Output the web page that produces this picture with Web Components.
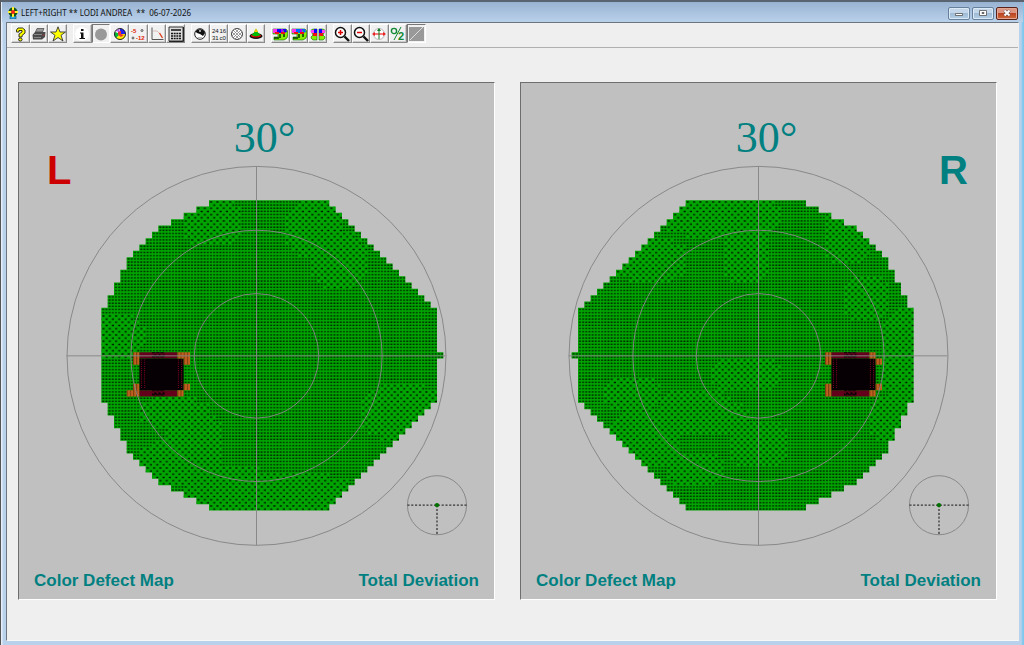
<!DOCTYPE html>
<html lang="en">
<head>
<meta charset="utf-8">
<title>LEFT+RIGHT ** LODI ANDREA ** 06-07-2026</title>
<style>
html, body { height: 100%; margin: 0; }
body { font-family: "Liberation Sans", Arial, sans-serif; background: #b9d1ea; }
</style>
</head>
<body>
<app-window caption="LEFT+RIGHT ** LODI ANDREA  **  06-07-2026">
  <tool-bar slot="tools">
    <tool-group>
      <tool-button icon="help" label="Help"></tool-button>
      <tool-button icon="print" label="Print"></tool-button>
      <tool-button icon="star" label="Favourites"></tool-button>
    </tool-group>
    <tool-group size="6">
      <tool-button icon="info" label="Information"></tool-button>
      <tool-button icon="disc" label="Defect map" pressed></tool-button>
      <tool-button icon="wheel" label="Colour map"></tool-button>
      <tool-button icon="values" label="Deviation values"></tool-button>
      <tool-button icon="curve" label="Defect curve"></tool-button>
      <tool-button icon="grid" label="Table"></tool-button>
    </tool-group>
    <tool-group size="4">
      <tool-button icon="gray" label="Gray scale"></tool-button>
      <tool-button icon="numbers" label="Thresholds"></tool-button>
      <tool-button icon="hatch" label="Symbols"></tool-button>
      <tool-button icon="hill" label="Hill of vision"></tool-button>
    </tool-group>
    <tool-group>
      <tool-button icon="pairA" label="Compare left"></tool-button>
      <tool-button icon="pairB" label="Compare right"></tool-button>
      <tool-button icon="pairC" label="Compare both"></tool-button>
    </tool-group>
    <tool-group size="5">
      <tool-button icon="zoomIn" label="Zoom in"></tool-button>
      <tool-button icon="zoomOut" label="Zoom out"></tool-button>
      <tool-button icon="target" label="Center"></tool-button>
      <tool-button icon="percent" label="Percent"></tool-button>
      <tool-button icon="diagonal" label="Diagonal" pressed></tool-button>
    </tool-group>
  </tool-bar>
  <field-panel eye="left">
    <span slot="range">30°</span><span slot="eye">L</span>
    <span slot="kind">Color Defect Map</span><span slot="measure">Total Deviation</span>
  </field-panel>
  <field-panel eye="right">
    <span slot="range">30°</span><span slot="eye">R</span>
    <span slot="kind">Color Defect Map</span><span slot="measure">Total Deviation</span>
  </field-panel>
</app-window>

<script>
const ICONS = {
  help: '<path d="M4.500 5.500V4L6 2h4.500L13 4v3l-3 2.500V11H7V8l3-2V4.500H7V6H4.500z" fill="#ff0" stroke="#000" stroke-width=".8"/><ellipse cx="8.300" cy="13.500" rx="1.800" ry="1.500" fill="#ff0" stroke="#000" stroke-width=".8"/>',
  print: '<path d="M6 2.500 13 2.500 11.500 6H4.500z" fill="#999" stroke="#444" stroke-width=".7"/><path d="M1.500 9 4 6h10.500L14 11l-3 2.500H2z" fill="#4a4a4a"/><path d="M3 8.500h8" stroke="#999" stroke-width=".8"/><path d="M3 11.500h7" stroke="#888"/><path d="M11.500 9h2" stroke="#a33"/>',
  star: '<path d="M8 .8 10 6h5.500L11 9.300l2 5.700-5-3.500L3 15l2-5.700L.5 6H6z" fill="#ff0" stroke="#333" stroke-width=".9"/>',
  info: '<circle cx="8" cy="8" r="7" fill="#fff"/><path d="M7 3h2.500v2H7zM6 6.500h3.500V12H11v1H5.500v-1H7V7.500H6z" fill="#111"/>',
  disc: '<circle cx="8" cy="8.500" r="6" fill="#999"/>',
  wheel: '<circle cx="8" cy="8" r="5.500" fill="#fff"/><path d="M8 8V2.500A5.500 5.500 0 0 1 13.500 8z" fill="#22f"/><path d="M8 8h5.500A5.500 5.500 0 0 1 4 12z" fill="#fe0"/><path d="M8 8 4 12A5.500 5.500 0 0 1 3 6l3 1z" fill="#0b3"/><path d="M6 5h3v3l3 1-3 2-3-2z" fill="#e33"/><path d="M3.500 5l4-2.500V6z" fill="#b5f"/><circle cx="8" cy="8" r="5.500" fill="none" stroke="#222"/>',
  values: '<g font-family="Liberation Sans, sans-serif" font-weight="bold" font-size="6" fill="#d20"><text x="1" y="6.500">-5</text><text x="6" y="14">-12</text></g><g fill="none" stroke="#333" stroke-width=".8"><circle cx="12" cy="4.500" r="1"/><circle cx="3" cy="12" r="1"/></g>',
  curve: '<path d="M3 1.500v12H14.500" fill="none" stroke="#555"/><path d="M4 5h4l3 3 2 3" fill="none" stroke="#dbb"/><path d="M10.500 7l3 5" stroke="#d42" stroke-width="1.400"/>',
  grid: '<path d="M1 1h14v14H1z" fill="#ddd" stroke="#333"/><path d="M3 4h10M3 7.500h10M3 10h10M3 12.500h10" stroke="#111" stroke-width="1.500"/><path d="M5.500 6v8M8 6v8M10.500 6v8" stroke="#ddd" stroke-width=".7"/><path d="M15.500 1v14.500H1" stroke="#222" fill="none"/>',
  gray: '<circle cx="8" cy="8" r="5.300" fill="#fff" stroke="#222"/><path d="M3.500 5.500A5.300 5.300 0 0 1 13 7L11 10 8 8 5 7z" fill="#111"/><circle cx="8" cy="5" r="1" fill="#ccc"/><path d="M5 11q3 3 6 0z" fill="#bbb"/>',
  numbers: '<g font-family="Liberation Sans, sans-serif" font-size="6" fill="#111"><text x="1" y="7">24</text><text x="8.500" y="7">16</text><text x="1" y="14">31</text><text x="8.500" y="14">c0</text></g>',
  hatch: '<circle cx="8" cy="8" r="5.500" fill="#fff"/><path d="M4 4l8 8M6 3l7 7M3 6l7 7M12 4l-8 8M10 3l-7 7M13 6l-7 7" stroke="#888" stroke-width=".8"/><circle cx="8" cy="8" r="5.500" fill="none" stroke="#444"/>',
  hill: '<ellipse cx="8" cy="10" rx="6.500" ry="3" fill="#111"/><path d="M3 9q3-1 4-5l1-1 1 1q1 4 4 5-5 3-10 0z" fill="#0b0"/><path d="M6 6l2-3.500L10 6z" fill="#fc0"/><path d="M3 9.500q5 3 10 0" stroke="#e00" stroke-width="1.200" fill="none"/>',
  pairA: '<path d="M1 3h13q2 1 2 5 0 5-4 6H2v-3h4V8H1z" fill="#8e0" stroke="#060" stroke-width=".6"/><path d="M1 3h4v4H1z" fill="#f3e"/><path d="M5 3h4v4H5zM11 3h3l1 3-3 1z" fill="#10f"/><path d="M9 3h2v3H9z" fill="#a0f"/><path d="M3 6h4v2H3zM9 6h4v2H9z" fill="#e11"/><path d="M2 12h5M8 8v4M12 8v3" stroke="#030" stroke-width="1.500"/>',
  zoomIn: '<circle cx="6.500" cy="6.500" r="5" fill="#fff" stroke="#111" stroke-width="1.500"/><path d="M10.500 10.500 15 15" stroke="#111" stroke-width="2.400"/><path d="M4 6.500h5M6.500 4v5" stroke="#d00" stroke-width="1.500"/>',
  zoomOut: '<circle cx="6.500" cy="6.500" r="5" fill="#fff" stroke="#111" stroke-width="1.500"/><path d="M10.500 10.500 15 15" stroke="#111" stroke-width="2.400"/><path d="M4 6.500h5" stroke="#d00" stroke-width="1.500"/>',
  target: '<circle cx="8" cy="8" r="5.500" fill="#fff" stroke="#999" stroke-width=".7"/><path d="M2 8h12" stroke="#e22" stroke-width="1.200"/><path d="M4 6v4L1 8zM12 6v4l3-2z" fill="#e22"/><path d="M8 3v10" stroke="#172"/><path d="M6 5h4L8 2z" fill="#172"/>',
  percent: '<circle cx="4" cy="5" r="2.600" fill="none" stroke="#183" stroke-width="1.400"/><path d="M11 1 4 14" stroke="#183"/><text x="8" y="14" font-family="Liberation Sans, sans-serif" font-weight="bold" font-size="11" fill="#183">2</text>',
  diagonal: '<path d="M0 1h15v14H0z" fill="#999"/><path d="M1 14 14 1" stroke="#ddd"/>'
};
ICONS.pairB = ICONS.pairA.replace('#10f', '#06f');
ICONS.pairC = '<path d="M1 5q0-2 3-2h3v11H3q-2-1-2-3l2-2zM15 5q0-2-3-2H9v11h4q2-1 2-3l-2-2z" fill="#8e0" stroke="#060" stroke-width=".6"/><path d="M1 4h3v3H1zM12 4h3v3h-3z" fill="#f4e"/><path d="M4 3h3v4H4zM9 3h3v4H9z" fill="#10f"/><path d="M3 7h4v3H3zM9 7h4v3H9z" fill="#e11"/>';

function define(name, html, setup) {
  const template = document.createElement('template');
  template.innerHTML = html;
  customElements.define(name, class extends HTMLElement {
    constructor() {
      super();
      this.attachShadow({ mode: 'open' }).append(template.content.cloneNode(true));
    }
    connectedCallback() { if (setup) setup(this, this.shadowRoot); }
  });
}

define('window-controls', `
<style>
:host { display: flex; gap: 2px; }
button { box-sizing: border-box; width: 22px; height: 13px; padding: 0; display: grid; place-items: center;
  border: 1px solid #66809c; border-radius: 2px; box-shadow: inset 0 0 0 1px #dbe8f5;
  background: linear-gradient(#c3d6ea 50%, #9fbbd6 50%, #b5cee6); }
.close { border-color: #5c2118; box-shadow: inset 0 0 0 1px #e2a592; background: linear-gradient(#dc9583 50%, #bd4422 50%, #ce6a3c); }
svg { width: 10px; height: 8px; display: block; }
</style>
<button aria-label="Minimize"><svg viewBox="0 0 10 8"><path d="M1.500 4.500h7v2h-7z" fill="#fff" stroke="#555" stroke-width=".8"/></svg></button>
<button aria-label="Restore"><svg viewBox="0 0 10 8"><path d="M1.500 1.500h7v5h-7z" fill="#fff" stroke="#555" stroke-width=".8"/><path d="M4 3.500h2v1H4z" fill="#789" stroke="#555" stroke-width=".8"/></svg></button>
<button class="close" aria-label="Close"><svg viewBox="0 0 10 8"><path d="m2.500 1.500 5 5m0-5-5 5" stroke="#544" stroke-width="3"/><path d="m2.500 1.500 5 5m0-5-5 5" stroke="#fff" stroke-width="2"/></svg></button>
`);

define('app-window', `
<style>
:host { display: flex; flex-direction: column; box-sizing: border-box; min-height: 100%;
  padding: 0 5px 4px; border-top: 2px solid #5a6370; border-left: 1px solid #555;
  background: linear-gradient(90deg, #e4eef8 1px, #b9d1ea 2px, #b9d1ea calc(100% - 3px), #7cc8ee calc(100% - 1px)); }
header { display: flex; align-items: center; box-sizing: border-box; height: 20px; margin-inline: -4px; padding: 2px 5px 0 4px;
  background: linear-gradient(#98b3d2, #bad1ea); }
header svg { width: 12px; height: 12px; margin-left: 1px; }
h1 { flex: 1; margin: 0 0 0 2px; font: 8px/16px "Noto Sans", "Open Sans", sans-serif; white-space: pre; color: #111; }
main { flex: 1; background: #efefef; border: 1px solid #6d7680; border-right-color: #eee; border-bottom-color: #f8f8f8; }
.views { display: grid; grid-template-columns: 1fr 1fr; align-items: start; gap: 25px; padding: 34px 21px 38px 11px; }
</style>
<header>
  <svg viewBox="0 0 12 12" aria-hidden="true"><path d="M3 9h6v3H3z" fill="#3ad" stroke="#046" stroke-width=".6"/><circle cx="6" cy="5" r="4.500" fill="#151"/><path d="M6 0v10M1 5h10" stroke="#fe3" stroke-width="2"/><circle cx="6" cy="5" r="2" fill="#e22"/></svg>
  <h1></h1>
  <window-controls></window-controls>
</header>
<main><slot name="tools"></slot><div class="views"><slot></slot></div></main>
`, (host, root) => { root.querySelector('h1').textContent = host.getAttribute('caption'); });

define('tool-bar', `
<style>:host { display: flex; gap: 6px; padding: 1px 4px 4px; border-bottom: 1px solid #b0b0b0; }</style><slot></slot>
`, host => host.setAttribute('role', 'toolbar'));

define('tool-group', `
<style>
:host { display: flex; width: 56px; height: 19px; }
:host([size="4"]) { width: 74px; } :host([size="5"]) { width: 93px; } :host([size="6"]) { width: 112px; }
</style><slot></slot>
`);

define('tool-button', `
<style>
:host { display: flex; flex: 1; min-width: 0; }
button { flex: 1; min-width: 0; box-sizing: border-box; padding: 0; display: grid; place-items: center; background: #f1f1f1;
  border: 1px solid; border-color: #fff #8a8a8a #8a8a8a #fff; box-shadow: inset -1px -1px #ccc; }
button[aria-pressed="true"] { border-color: #777 #fff #fff #777; box-shadow: none; }
svg { width: 16px; height: 16px; display: block; }
</style><button></button>
`, (host, root) => {
  const b = root.querySelector('button');
  b.setAttribute('aria-label', host.getAttribute('label'));
  b.setAttribute('aria-pressed', host.hasAttribute('pressed'));
  b.innerHTML = `<svg viewBox="0 0 16 16" aria-hidden="true">${ICONS[host.getAttribute('icon')]}</svg>`;
});

/* Visual field map: 53 x 49 cells of 6 units. First column of the curved side, per row from the top. */
const CURVE = [17, 15, 13, 11, 9, 8, 7, 6, 5, 4, 4, 3, 3, 2, 2, 1, 1];
const FIELDS = {
  left: {
    x: 78, flip: false,
    sparse: [[17,3,5,4],[2,21,4.5,4],[33,4,5,5],[37,9,5,4.5],[47,33,7,4.5],[31,46,9,3.5],[14,37,5,5],[12,41,7,4],[20,45,8,3.5],[11,33,6,2.5]],
    spot: 6,
    edge: [[5,24],[5,25],[12,24],[13,24],[13,25],[5,29],[5,30],[4,30],[13,29],[12,30]]
  },
  right: {
    x: 54, flip: true,
    sparse: [[22,2,10,3.5],[11,9,6,4],[26,8,4,5],[8,30,5,3],[18,32,6,3],[26,27,6,3],[10,37,6,5],[20,34,7,3],[28,38,5,4],[18,42,5,3],[42,5,4,5],[45,15,4,4],[51,24,4,8],[49,34,4,4]],
    spot: 40,
    edge: [[39,24],[39,25],[39,29],[39,30],[46,24],[47,25],[47,29],[46,30]]
  }
};

function fieldMap(field) {
  const box = (c, r, w = 1, h = 1) => `M${c * 6} ${r * 6}h${w * 6}v${h * 6}h${-w * 6}z`;
  let body = '', dense = '', sparse = '';
  for (let r = 0; r < 49; r++) {
    const k = Math.min(r, 48 - r);
    let a = CURVE[k] || 0, b = Math.min(53, 36 + k);
    if (r === 24) b = 54;
    if (field.flip) [a, b] = [53 - b, 53 - a];
    body += box(a, r, b - a);
    for (let c = a; c < b; c++) {
      const light = field.sparse.some(([x, y, w, h]) => ((c - x) / w) ** 2 + ((r - y) / h) ** 2 < 1);
      if (light) sparse += box(c, r); else dense += box(c, r);
    }
  }
  const s = field.spot;
  return `<g transform="translate(${field.x} 111)">
    <path d="${body}" fill="#00a400"/>
    <path d="${dense}" fill="url(#dense)"/><path d="${sparse}" fill="url(#sparse)"/>
    <path d="${box(s, 24, 6)}${box(s, 30, 6)}" fill="#64001c"/>
    <path d="${box(s, 25, 7, 5)}" fill="#060004"/>
    <path d="${box(s + 2, 24, 2)}${box(s + 2, 30, 2)}" fill="url(#speck)"/>
    <path d="M${s * 6 + 2} 151v28M${s * 6 + 5} 151v28M${s * 6 + 37} 151v28M${s * 6 + 40} 151v28" stroke="#780020" stroke-dasharray="1 1"/>
    <path d="${field.edge.map(([c, r]) => box(c, r)).join('')}" fill="url(#orange)"/>
  </g>`;
}

define('field-map', `
<style>:host { display: block; } svg { display: block; width: 100%; height: auto; }</style><div></div>
`, (host, root) => {
  root.querySelector('div').innerHTML = `<svg viewBox="0 0 450 489" role="img" aria-label="Visual field map">
  <defs>
    <pattern id="dense" width="3" height="3" patternUnits="userSpaceOnUse"><path d="M1 1h1.700v1.300H1z" fill="#002400"/></pattern>
    <pattern id="sparse" width="6" height="6" patternUnits="userSpaceOnUse"><path d="M1 1h2v1.400H1zM4 4h2v1.400H4z" fill="#001400"/></pattern>
    <pattern id="speck" width="4" height="4" patternUnits="userSpaceOnUse"><path d="M0 0h3v1H0zM2 2h2v2H2zM0 3h1v1H0z" fill="#060004"/></pattern>
    <pattern id="orange" width="3" height="6" patternUnits="userSpaceOnUse"><path d="M0 0h3v6H0z" fill="#c06020"/><path d="M0 0h1v6H0z" fill="#7a3c0c"/></pattern>
  </defs>
  ${fieldMap(FIELDS[host.getAttribute('eye')])}
  <g fill="none" stroke="#868686" stroke-width=".9">
    <circle cx="225" cy="258.500" r="179.500"/><circle cx="225" cy="258.500" r="119"/><circle cx="225" cy="258.500" r="59"/>
    <path d="M225 79v359M45 258.500h359"/>
    <circle cx="396" cy="400" r="28"/>
    <path d="M368 400h56M396 400v28" stroke="#333" stroke-width="1.200" stroke-dasharray="2 1.600"/>
  </g>
  <circle cx="396" cy="400" r="2" fill="#007000"/></svg>`;
});

define('field-panel', `
<style>
:host { display: grid; box-sizing: border-box; min-width: 0; background: #c0c0c0; color: #008080;
  border: 1px solid; border-color: #6e6e6e #fff #fff #6e6e6e; }
.map, .labels { grid-area: 1 / 1; min-width: 0; }
.labels { display: flex; flex-direction: column; padding: 37px 15px 8px; }
.range { text-align: center; font: 44px/36px "Liberation Serif", serif; padding-left: 16px; }
.eye { font-size: 40px; line-height: 28px; font-weight: bold; padding-inline: 13px; }
:host([eye="left"]) .eye { color: #cc0000; }
:host([eye="right"]) .eye { text-align: right; }
footer { display: flex; justify-content: space-between; margin-top: auto; font-size: 17px; line-height: 20px; font-weight: bold; }
</style>
<div class="map"></div>
<div class="labels">
  <div class="range"><slot name="range"></slot></div>
  <div class="eye"><slot name="eye"></slot></div>
  <footer><slot name="kind"></slot><slot name="measure"></slot></footer>
</div>
`, (host, root) => {
  const map = document.createElement('field-map');
  map.setAttribute('eye', host.getAttribute('eye'));
  root.querySelector('.map').replaceChildren(map);
});
</script>
</body>
</html>
